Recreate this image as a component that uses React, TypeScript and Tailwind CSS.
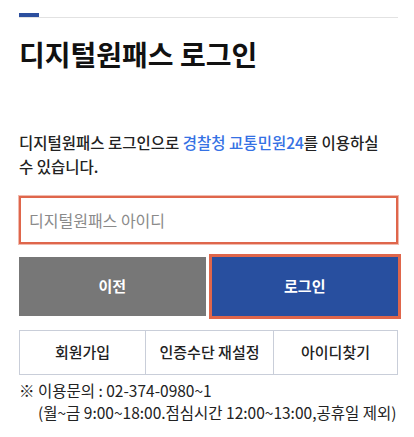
const links = ["회원가입", "인증수단 재설정", "아이디찾기"];

export default function App() {
  return (
    <div className="min-h-[437px] bg-white pl-[19px] pr-[16px] pt-[13px] font-['Noto_Sans_CJK_KR','Noto_Sans',sans-serif] text-[#222]">
      <div className="border-b border-[#e2e2e2]">
        <div className="h-[4px] w-[20px] bg-[#2c4f9e]" />
      </div>

      <h1 className="mt-[17px] text-[28px] font-bold leading-[39px] text-[#111]">디지털원패스 로그인</h1>

      <p className="mt-[56px] text-[15.5px] font-medium leading-[24px]">
        디지털원패스 로그인으로 <span className="text-[#3571e4]">경찰청 교통민원24</span>를 이용하실
        <br />수 있습니다.
      </p>

      <input
        type="text"
        placeholder="디지털원패스 아이디"
        className="mt-[18px] block h-[48px] w-full border-2 border-[#df664b] px-[8px] text-[16px] text-[#333] shadow-[0_0_0_1px_rgba(223,102,75,0.45)] outline-none placeholder:text-[#8a8a8a]"
      />

      <div className="mt-[13px] grid grid-cols-2 gap-[6px]">
        <button type="button" className="h-[59px] bg-[#777777] text-[15px] font-bold text-white">
          이전
        </button>
        <button
          type="button"
          className="h-[59px] bg-[#284f9f] text-[15px] font-bold text-white outline-[3px] outline-solid outline-[#df664b]"
        >
          로그인
        </button>
      </div>

      <div className="mt-[14px] grid h-[45px] grid-cols-[125px_128px_1fr] border border-[#c9ced9]">
        {links.map((label, i) => (
          <button
            key={label}
            type="button"
            className={
              i > 0
                ? "border-l border-[#c9ced9] text-[15px] font-medium text-[#222]"
                : "text-[15px] font-medium text-[#222]"
            }
          >
            {label}
          </button>
        ))}
      </div>

      <div className="mt-[4px] text-[15.5px] leading-[22px] text-[#222]">
        <p>※ 이용문의 : 02-374-0980~1</p>
        <p className="whitespace-nowrap pl-[19px]">(월~금 9:00~18:00.점심시간 12:00~13:00,공휴일 제외)</p>
      </div>
    </div>
  );
}
